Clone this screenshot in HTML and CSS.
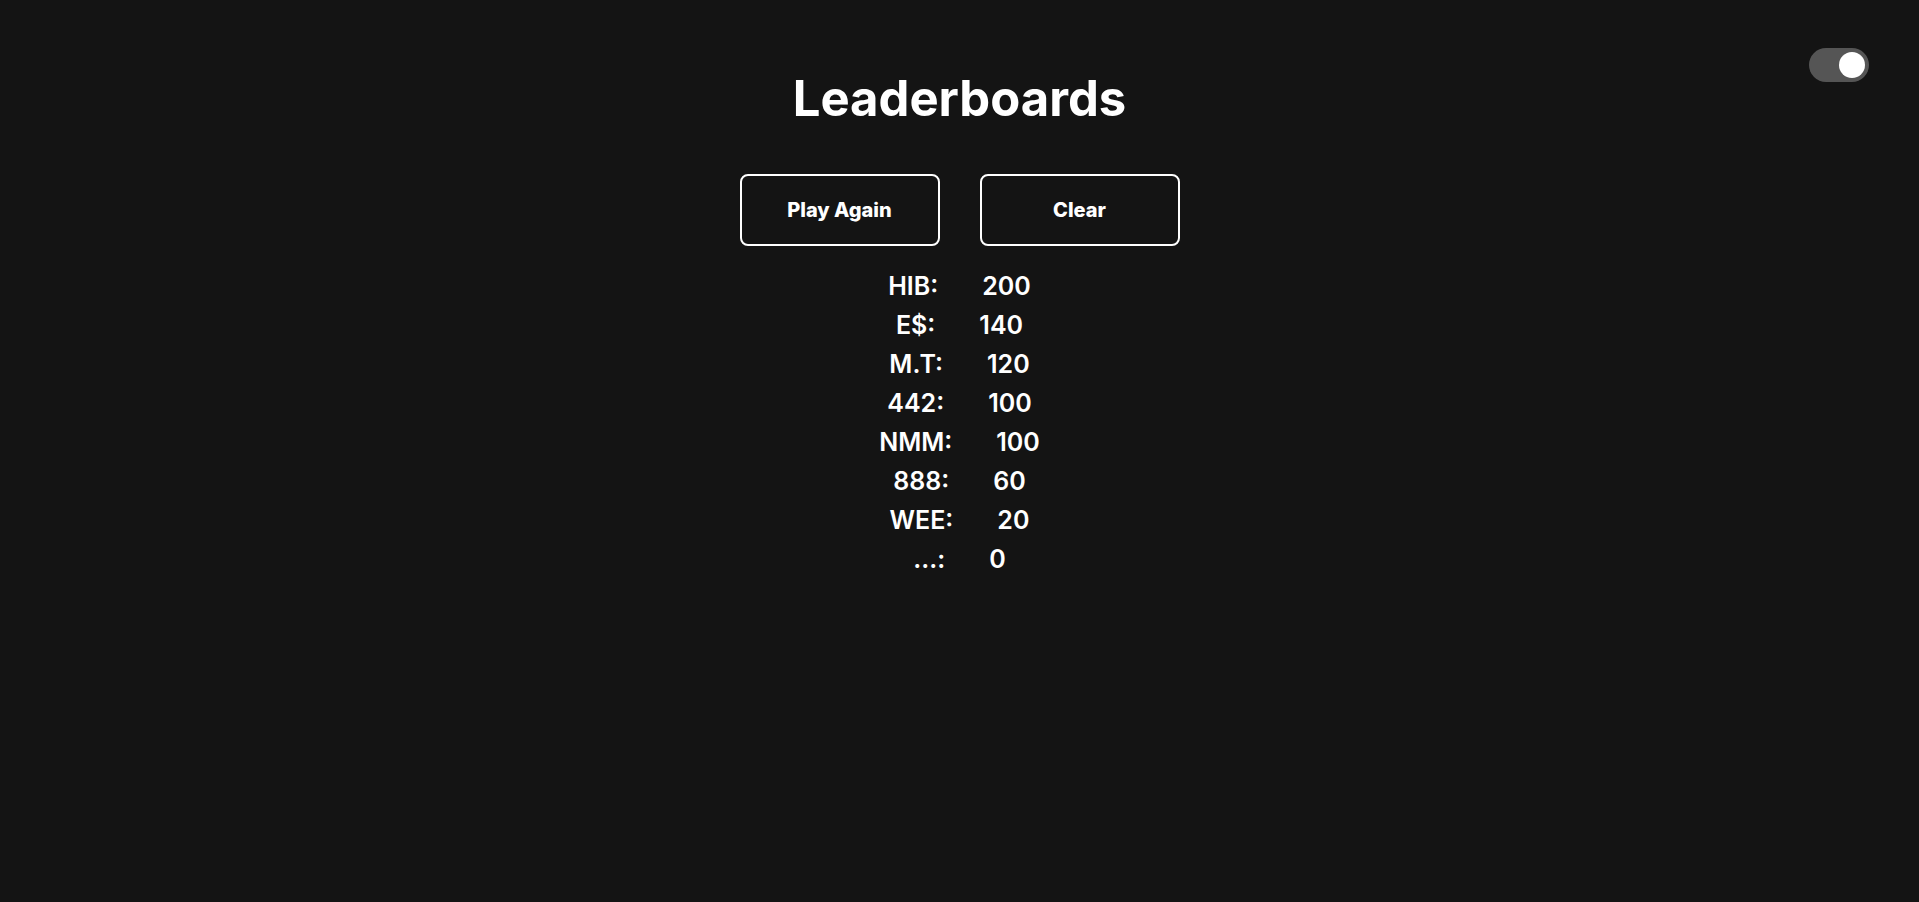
FILE: index.html
```html
<!DOCTYPE html>
<html lang="en">
<head>
<meta charset="utf-8">
<title>Leaderboards</title>
<link rel="stylesheet" href="styles.css">
</head>
<body>
<div class="toggle"><span class="knob"></span></div>
<main class="page">
  <h1 class="title">Leaderboards</h1>
  <div class="actions">
    <button class="btn">Play Again</button>
    <button class="btn">Clear</button>
  </div>
  <ul class="scores">
    <li class="row"><span class="name">HIB:</span><span class="score">200</span></li>
    <li class="row"><span class="name">E$:</span><span class="score">140</span></li>
    <li class="row"><span class="name">M.T:</span><span class="score">120</span></li>
    <li class="row"><span class="name">442:</span><span class="score">100</span></li>
    <li class="row"><span class="name">NMM:</span><span class="score">100</span></li>
    <li class="row"><span class="name">888:</span><span class="score">60</span></li>
    <li class="row"><span class="name">WEE:</span><span class="score">20</span></li>
    <li class="row"><span class="name">...:</span><span class="score">0</span></li>
  </ul>
</main>
</body>
</html>
```
FILE: styles.css
```css
html, body {
  margin: 0;
  padding: 0;
  background: #141414;
  color: #ffffff;
  font-family: Inter, "Open Sans", sans-serif;
}

.page {
  display: flex;
  flex-direction: column;
  align-items: center;
  padding-top: 64px;
}

.title {
  margin: 0;
  font-size: 49px;
  font-weight: 700;
  line-height: 70px;
}

.actions {
  display: flex;
  gap: 40px;
  margin-top: 40px;
}

.btn {
  width: 200px;
  height: 72px;
  background: transparent;
  color: #ffffff;
  border: 2px solid #ffffff;
  border-radius: 8px;
  font-family: inherit;
  font-size: 20px;
  font-weight: 800;
  cursor: pointer;
}

.scores {
  list-style: none;
  margin: 21px 0 0;
  padding: 0;
  display: flex;
  flex-direction: column;
  align-items: center;
}

.row {
  font-size: 25px;
  font-weight: 600;
  line-height: 39px;
}

.score {
  margin-left: 44px;
}

.toggle {
  position: fixed;
  top: 48px;
  right: 50px;
  width: 60px;
  height: 34px;
  border-radius: 17px;
  background: #555555;
}

.knob {
  position: absolute;
  top: 4px;
  right: 4px;
  width: 26px;
  height: 26px;
  border-radius: 50%;
  background: #ffffff;
}
```
